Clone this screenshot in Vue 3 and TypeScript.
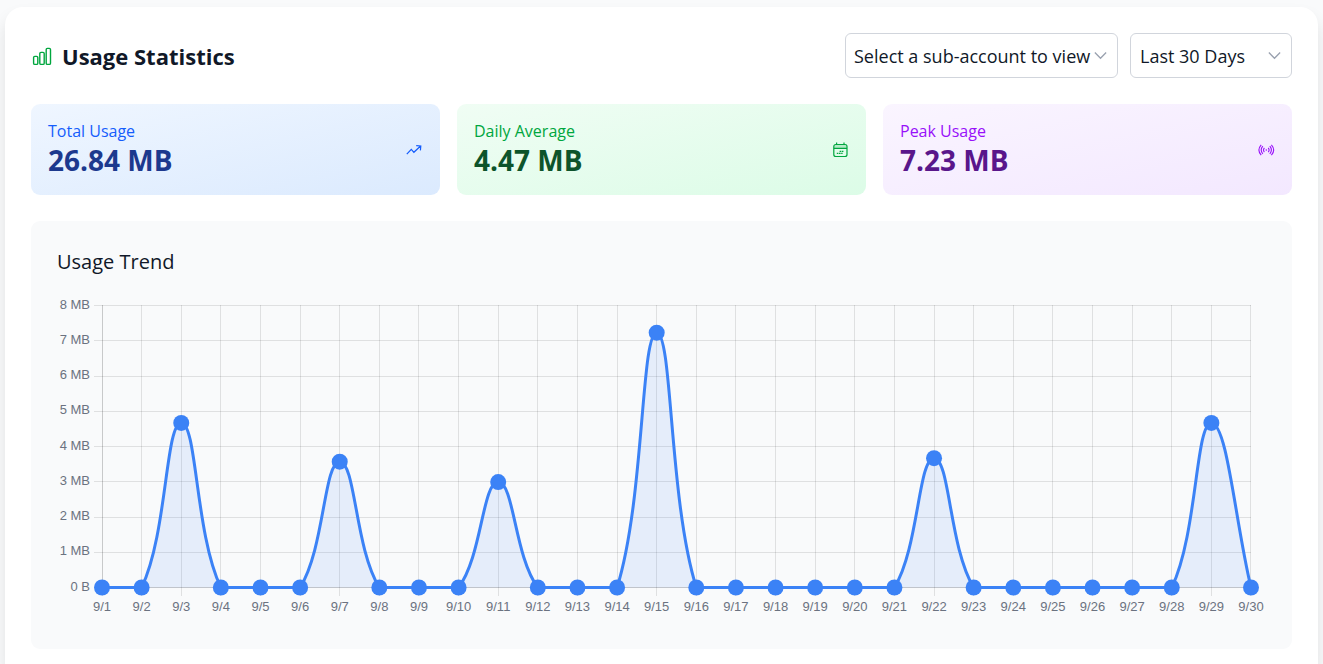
<script setup lang="ts">
import { computed, onBeforeUnmount, onMounted, ref } from 'vue'

interface Stat {
  key: string
  label: string
  value: string
}

interface Point {
  x: number
  y: number
}

const stats: Stat[] = [
  { key: 'total', label: 'Total Usage', value: '26.84 MB' },
  { key: 'average', label: 'Daily Average', value: '4.47 MB' },
  { key: 'peak', label: 'Peak Usage', value: '7.23 MB' },
]

const account = ref('')
const period = ref('30')

// Daily usage in MB, days without traffic are zero
const usageByDay: Record<number, number> = { 3: 4.67, 7: 3.57, 11: 2.99, 15: 7.23, 22: 3.67, 29: 4.67 }
const days = Array.from({ length: 30 }, (_, i) => ({
  label: `9/${i + 1}`,
  value: usageByDay[i + 1] ?? 0,
}))

const maxValue = 8
const chartHeight = 328
const area = { left: 45, right: 16, top: 10, bottom: 292 }
const tension = 0.4

const holder = ref<HTMLElement | null>(null)
const chartWidth = ref(1200)
let observer: ResizeObserver | undefined

function measure(): void {
  if (holder.value) chartWidth.value = holder.value.clientWidth
}

onMounted(() => {
  measure()
  observer = new ResizeObserver(measure)
  if (holder.value) observer.observe(holder.value)
})
onBeforeUnmount(() => observer?.disconnect())

const plotRight = computed(() => chartWidth.value - area.right)

const baseline = area.bottom + 0.5
const yFor = (value: number): number => baseline - (value / maxValue) * (area.bottom - area.top)
const crisp = (n: number): number => Math.floor(n) + 0.5
const crispX = (n: number): number => crisp(Math.min(n, plotRight.value))

const points = computed<Point[]>(() =>
  days.map((day, i) => ({
    x: area.left + (i * (plotRight.value + 1 - area.left)) / (days.length - 1),
    y: yFor(day.value),
  })),
)

const ticks = Array.from({ length: maxValue + 1 }, (_, i) => ({
  y: yFor(i),
  label: i === 0 ? '0 B' : `${i} MB`,
}))

const clampY = (y: number): number => Math.min(baseline, Math.max(area.top, y))

// Cardinal spline whose control points stay inside the plot area
const linePath = computed(() => {
  const pts = points.value
  const controls = pts.map((cur, i) => {
    const prev = pts[i - 1] ?? cur
    const next = pts[i + 1] ?? cur
    const before = Math.hypot(cur.x - prev.x, cur.y - prev.y)
    const after = Math.hypot(next.x - cur.x, next.y - cur.y)
    const a = (tension * before) / (before + after)
    const b = (tension * after) / (before + after)
    return {
      inX: cur.x - a * (next.x - prev.x),
      inY: clampY(cur.y - a * (next.y - prev.y)),
      outX: cur.x + b * (next.x - prev.x),
      outY: clampY(cur.y + b * (next.y - prev.y)),
    }
  })
  return pts
    .map((p, i) => {
      if (i === 0) return `M${p.x} ${p.y}`
      const from = controls[i - 1]
      const to = controls[i]
      return `C${from.outX} ${from.outY} ${to.inX} ${to.inY} ${p.x} ${p.y}`
    })
    .join(' ')
})

const fillPath = computed(() => {
  const pts = points.value
  return `${linePath.value} L${pts[pts.length - 1].x} ${baseline} L${pts[0].x} ${baseline} Z`
})
</script>

<template>
  <main class="panel">
    <header class="head">
      <h1 class="title">
        <svg class="title-icon" viewBox="0 0 22 22" aria-hidden="true">
          <rect x="2.6" y="11.4" width="4.2" height="8" rx="1.2" />
          <rect x="8.8" y="7.4" width="4.4" height="12" rx="1.2" />
          <rect x="15.2" y="3.4" width="4.3" height="16" rx="1.2" />
        </svg>
        Usage Statistics
      </h1>
      <div class="filters">
        <div class="picker picker-account">
          <select v-model="account" aria-label="Sub-account">
            <option value="">Select a sub-account to view</option>
          </select>
          <svg class="chevron" viewBox="0 0 12 12" aria-hidden="true"><path d="M0.8 3.3 L6 8.5 L11.2 3.3" /></svg>
        </div>
        <div class="picker picker-period">
          <select v-model="period" aria-label="Period">
            <option value="30">Last 30 Days</option>
          </select>
          <svg class="chevron" viewBox="0 0 12 12" aria-hidden="true"><path d="M0.8 3.3 L6 8.5 L11.2 3.3" /></svg>
        </div>
      </div>
    </header>

    <section class="stats">
      <article v-for="stat in stats" :key="stat.key" class="stat" :class="stat.key">
        <div>
          <p class="stat-label">{{ stat.label }}</p>
          <p class="stat-value">{{ stat.value }}</p>
        </div>
        <svg v-if="stat.key === 'total'" class="stat-icon" viewBox="0 0 18 18" aria-hidden="true">
          <path d="M1.8 13.2 L6.3 8.3 L8.9 11.3 L15.3 5.3 M11.2 4.6 L15.8 5 L15.4 9.4" />
        </svg>
        <svg v-else-if="stat.key === 'average'" class="stat-icon" viewBox="0 0 18 18" aria-hidden="true">
          <rect class="tint" x="2.8" y="3.5" width="13" height="4" />
          <rect x="2.8" y="3.5" width="13.2" height="12" rx="2" />
          <path d="M2.8 7.4 H16 M5.6 1.6 V4 M13 1.6 V4" />
          <path class="dots" d="M8.6 10.4 H13 M5.8 12.4 H11.6" />
        </svg>
        <svg v-else class="stat-icon waves" viewBox="0 0 18 18" aria-hidden="true">
          <path d="M4.2 3.8 Q-0.4 9 4.2 14.2 M5.8 5.2 Q2.6 9 5.8 12.8 M7.4 6.8 Q5.6 9 7.4 11.2" />
          <path d="M14.4 3.8 Q19 9 14.4 14.2 M12.8 5.2 Q16 9 12.8 12.8 M11.2 6.8 Q13 9 11.2 11.2" />
          <circle class="dot" cx="9.3" cy="9" r="0.8" />
        </svg>
      </article>
    </section>

    <section class="trend">
      <h2 class="trend-title">Usage Trend</h2>
      <div ref="holder" class="chart">
        <svg :width="chartWidth" :height="chartHeight" role="img" aria-label="Usage Trend">
          <g class="grid">
            <line
              v-for="tick in ticks"
              :key="tick.label"
              :x1="area.left - 8"
              :x2="plotRight + 1"
              :y1="crisp(tick.y)"
              :y2="crisp(tick.y)"
            />
            <line
              v-for="(p, i) in points"
              :key="i"
              :x1="crispX(p.x)"
              :x2="crispX(p.x)"
              :y1="area.top"
              :y2="area.bottom + 9"
            />
            <line :x1="area.left + 0.5" :x2="area.left + 0.5" :y1="area.top" :y2="area.bottom" />
            <line :x1="area.left" :x2="plotRight + 1" :y1="baseline" :y2="baseline" />
          </g>
          <path class="fill" :d="fillPath" />
          <path class="line" :d="linePath" />
          <circle v-for="(p, i) in points" :key="i" class="point" :cx="p.x" :cy="p.y" r="8" />
          <g class="labels">
            <text v-for="tick in ticks" :key="tick.label" :x="area.left - 12" :y="tick.y + 3" text-anchor="end">
              {{ tick.label }}
            </text>
            <text v-for="(p, i) in points" :key="i" :x="p.x" :y="area.bottom + 24" text-anchor="middle">
              {{ days[i].label }}
            </text>
          </g>
        </svg>
      </div>
    </section>
  </main>
</template>

<style>
body {
  background: #f9fafb;
}
</style>

<style scoped>
.panel {
  box-sizing: border-box;
  min-height: calc(100vh - 7px);
  margin: 7px 5px 0;
  padding: 26px 26px 15px;
  border-radius: 18px 18px 0 0;
  background: #fff;
  box-shadow: 0 10px 16px rgba(0, 0, 0, 0.1);
  font-family: "Segoe UI", "Open Sans", "Noto Sans", sans-serif;
  color: #101828;
}

.head {
  display: flex;
  align-items: center;
  justify-content: space-between;
  gap: 12px;
}

.title {
  display: flex;
  align-items: center;
  gap: 9px;
  margin: 0;
  font-size: 22px;
  line-height: 32px;
  font-weight: 700;
}

.title-icon {
  width: 22px;
  height: 22px;
  fill: none;
  stroke: #00a63e;
  stroke-width: 1.4;
}

.filters {
  display: flex;
  gap: 12px;
}

.picker {
  display: flex;
  align-items: center;
  position: relative;
}

.picker-account {
  width: 273px;
}

.picker-period {
  width: 162px;
}

.picker select {
  width: 100%;
  height: 45px;
  padding: 0 24px 0 8px;
  border: 1px solid #d1d5dc;
  border-radius: 6px;
  appearance: none;
  background: #fff;
  color: #101828;
  font: inherit;
  font-size: 18px;
}

.picker-period select {
  padding-left: 9px;
}

.chevron {
  position: absolute;
  right: 11px;
  width: 13px;
  height: 13px;
  fill: none;
  stroke: #99a1af;
  stroke-width: 1.2;
  pointer-events: none;
}

.stats {
  display: grid;
  grid-template-columns: repeat(3, 1fr);
  gap: 17px;
  margin-top: 26px;
}

.stat {
  display: flex;
  align-items: center;
  justify-content: space-between;
  padding: 16px 17px;
  border-radius: 9px;
}

.total {
  background: linear-gradient(to bottom right, #eff6ff, #dbeafe);
  color: #155dfc;
}

.average {
  background: linear-gradient(to bottom right, #f0fdf4, #dcfce7);
  color: #00a63e;
}

.peak {
  background: linear-gradient(to bottom right, #faf5ff, #f3e8ff);
  color: #9810fa;
}

.stat-label,
.stat-value {
  margin: 0;
}

.stat-label {
  font-size: 16px;
  line-height: 22px;
}

.stat-value {
  font-size: 28px;
  line-height: 37px;
  font-weight: 700;
}

.total .stat-value {
  color: #1c398e;
}

.average .stat-value {
  color: #0d542b;
}

.peak .stat-value {
  color: #59168b;
}

.stat-icon {
  width: 18px;
  height: 18px;
  fill: none;
  stroke: currentColor;
  stroke-width: 1.2;
}

.tint {
  fill: currentColor;
  fill-opacity: 0.2;
  stroke: none;
}

.dots {
  stroke-dasharray: 1.6 0.6;
}

.waves {
  stroke-width: 1.1;
}

.dot {
  fill: currentColor;
  stroke: none;
}

.trend {
  margin-top: 26px;
  padding: 26px;
  border-radius: 9px;
  background: #f9fafb;
}

.trend-title {
  margin: 0 0 18px;
  font-size: 20px;
  line-height: 30px;
  font-weight: 400;
}

.chart {
  height: 328px;
  overflow: hidden;
}

.chart svg {
  display: block;
}

.grid line {
  stroke: rgba(0, 0, 0, 0.1);
}

.fill {
  fill: rgba(59, 130, 246, 0.1);
}

.line {
  fill: none;
  stroke: #3b82f6;
  stroke-width: 3;
}

.point {
  fill: #3b82f6;
}

.labels text {
  font-family: "Liberation Sans", Arial, sans-serif;
  font-size: 13px;
  fill: #6b7280;
}
</style>
